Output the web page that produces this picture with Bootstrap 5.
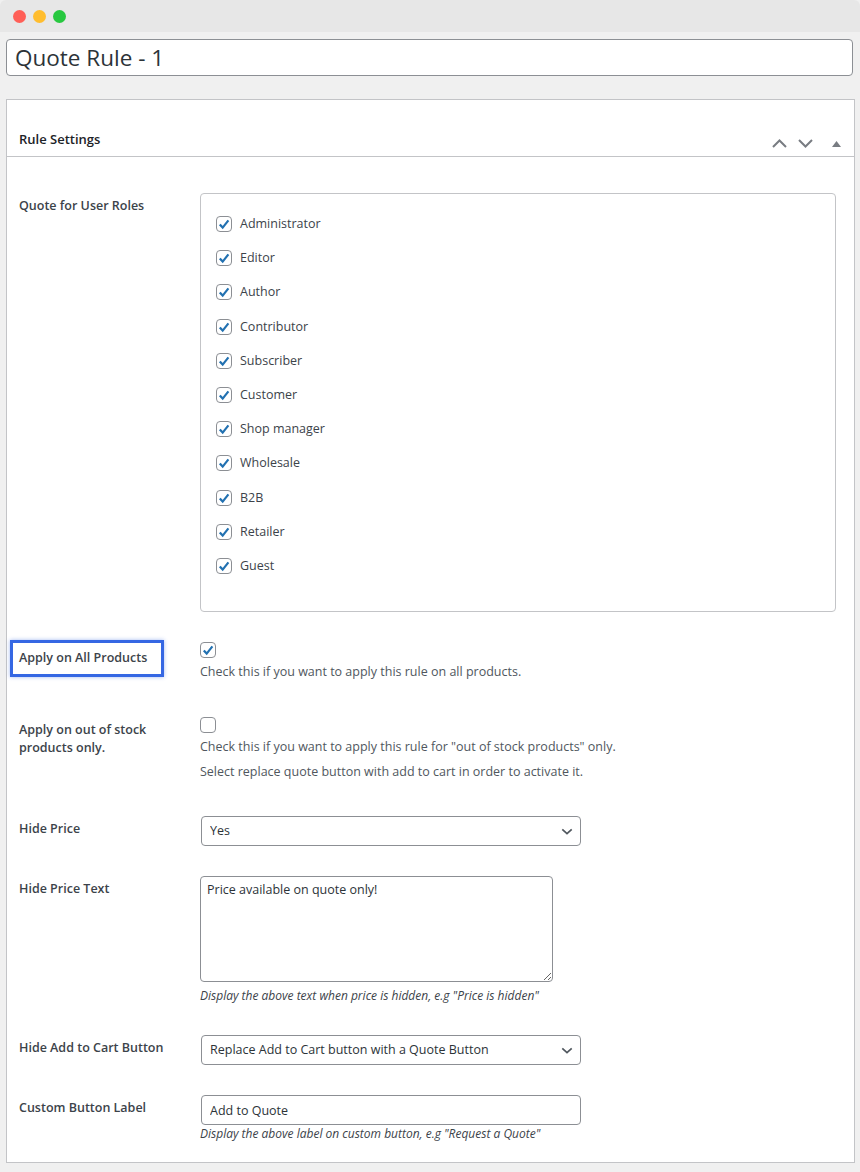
<!DOCTYPE html>
<html lang="en">
<head>
    <meta charset="UTF-8">
    <meta name="viewport" content="width=device-width, initial-scale=1.0">
    <title>Quote Rule - 1</title>
    <link href="https://cdn.jsdelivr.net/npm/bootstrap@5.3.0/dist/css/bootstrap.min.css" rel="stylesheet">
    <style>
        body {
            margin: 0;
            background-color: #f0f0f0;
            font-family: "Open Sans", "Noto Sans", sans-serif;
            font-size: 12.5px;
            line-height: 18px;
            color: #3c434a;
            height: 1172px;
            overflow: hidden;
        }

        /* mac style window bar */
        .win-bar {
            height: 32px;
            background-color: #e7e7e7;
            padding-left: 13px;
            gap: 7px;
            border-top-left-radius: 6px;
            border-top-right-radius: 6px;
        }

        .win-dot {
            width: 13px;
            height: 13px;
            border-radius: 50%;
        }

        .dot-red { background-color: #ff5f57; }
        .dot-yellow { background-color: #ffbd2e; }
        .dot-green { background-color: #28c840; }

        .title-input {
            display: block;
            width: 847px;
            height: 37px;
            margin: 7px 0 23px 6px;
            padding: 0 8px;
            font-size: 22.5px;
            color: #2c3338;
            border: 1px solid #8c8f94;
            border-radius: 4px;
            background: #fff;
        }

        .rule-panel {
            width: 849px;
            height: 1064px;
            margin-left: 6px;
            background: #fff;
            border: 1px solid #c3c4c7;
        }

        .panel-head {
            height: 57px;
            padding: 0 13px 8px 12px;
            border-bottom: 1px solid #c3c4c7;
            font-weight: 600;
            font-size: 13px;
            color: #1d2327;
        }

        .panel-tools { gap: 11px; color: #787c82; }

        .panel-body-wrap { padding: 36px 18px 0 12px; }

        .field-row { display: flex; }

        .field-label {
            width: 181px;
            flex-shrink: 0;
            font-weight: 600;
            color: #3c434a;
        }

        .roles-box {
            width: 637px;
            height: 419px;
            padding: 21px 15px;
            border: 1px solid #c3c4c7;
            border-radius: 4px;
            gap: 16.2px;
        }

        .role-item { gap: 8px; height: 18px; }

        .wp-check {
            appearance: none;
            width: 16px;
            height: 16px;
            margin: 0;
            border: 1px solid #8c8f94;
            border-radius: 4px;
            background: #fff;
            flex-shrink: 0;
            display: block;
        }

        .wp-check:checked {
            background-repeat: no-repeat;
            background-position: center;
            background-size: 14px 14px;
            background-image: url("data:image/svg+xml,%3Csvg xmlns='http://www.w3.org/2000/svg' viewBox='0 0 14 14'%3E%3Cpath d='M2.8 7.4 5.7 10.6 11.4 3.4' fill='none' stroke='%232271b1' stroke-width='2.2'/%3E%3C/svg%3E");
        }

        .highlight-box {
            width: 154px;
            height: 37px;
            margin: -2px 0 0 -9px;
            padding: 6px 0 0 6px;
            border: 3px solid #3567e3;
            box-shadow: 0 0 4px rgba(53, 103, 227, .45);
        }

        .field-text, .help-line { color: #50575e; }
        .help-italic { font-style: italic; color: #3c434a; font-size: 12px; line-height: 18px; }

        .wp-select, .wp-input {
            display: block;
            width: 380px;
            height: 30px;
            margin-left: 1px;
            padding: 0 8px;
            font-size: 12.5px;
            color: #2c3338;
            border: 1px solid #8c8f94;
            border-radius: 4px;
            background-color: #fff;
        }

        .wp-select {
            appearance: none;
            background-image: url("data:image/svg+xml,%3Csvg xmlns='http://www.w3.org/2000/svg' viewBox='0 0 14 8'%3E%3Cpath d='M1.5 1.5 7 6.5 12.5 1.5' fill='none' stroke='%2350575e' stroke-width='2'/%3E%3C/svg%3E");
            background-repeat: no-repeat;
            background-position: right 7px center;
            background-size: 12px 7px;
        }

        .wp-area {
            display: block;
            width: 353px;
            height: 106px;
            padding: 4px 6px;
            font-size: 12.5px;
            line-height: 18px;
            color: #2c3338;
            border: 1px solid #8c8f94;
            border-radius: 4px;
        }
    </style>
</head>
<body>

    <div class="win-bar d-flex align-items-center">
        <span class="win-dot dot-red"></span>
        <span class="win-dot dot-yellow"></span>
        <span class="win-dot dot-green"></span>
    </div>

    <input type="text" class="title-input" value="Quote Rule - 1">

    <div class="rule-panel">
        <div class="panel-head d-flex align-items-end justify-content-between">
            <span>Rule Settings</span>
            <div class="panel-tools d-flex align-items-center">
                <svg width="15" height="9" viewBox="0 0 15 9"><path d="M1 8 7.5 1.5 14 8" fill="none" stroke="#787c82" stroke-width="2"/></svg>
                <svg width="15" height="9" viewBox="0 0 15 9"><path d="M1 1 7.5 7.5 14 1" fill="none" stroke="#787c82" stroke-width="2"/></svg>
                <svg class="ms-2" width="9" height="6" viewBox="0 0 9 6"><path d="M4.5 0 9 6H0z" fill="#787c82"/></svg>
            </div>
        </div>

        <div class="panel-body-wrap">
            <div class="field-row">
                <label class="field-label pt-1">Quote for User Roles</label>
                <div class="roles-box d-flex flex-column">
                    <label class="role-item d-flex align-items-center"><input class="wp-check" type="checkbox" checked>Administrator</label>
                    <label class="role-item d-flex align-items-center"><input class="wp-check" type="checkbox" checked>Editor</label>
                    <label class="role-item d-flex align-items-center"><input class="wp-check" type="checkbox" checked>Author</label>
                    <label class="role-item d-flex align-items-center"><input class="wp-check" type="checkbox" checked>Contributor</label>
                    <label class="role-item d-flex align-items-center"><input class="wp-check" type="checkbox" checked>Subscriber</label>
                    <label class="role-item d-flex align-items-center"><input class="wp-check" type="checkbox" checked>Customer</label>
                    <label class="role-item d-flex align-items-center"><input class="wp-check" type="checkbox" checked>Shop manager</label>
                    <label class="role-item d-flex align-items-center"><input class="wp-check" type="checkbox" checked>Wholesale</label>
                    <label class="role-item d-flex align-items-center"><input class="wp-check" type="checkbox" checked>B2B</label>
                    <label class="role-item d-flex align-items-center"><input class="wp-check" type="checkbox" checked>Retailer</label>
                    <label class="role-item d-flex align-items-center"><input class="wp-check" type="checkbox" checked>Guest</label>
                </div>
            </div>

            <div class="field-row" style="margin-top: 30px">
                <div class="field-label"><div class="highlight-box">Apply on All Products</div></div>
                <div>
                    <input class="wp-check" type="checkbox" checked>
                    <div class="field-text" style="margin-top: 5px">Check this if you want to apply this rule on all products.</div>
                </div>
            </div>

            <div class="field-row" style="margin-top: 36px">
                <label class="field-label" style="padding-top: 4px; width: 181px">Apply on out of stock<br>products only.</label>
                <div>
                    <input class="wp-check" type="checkbox">
                    <div class="field-text" style="margin-top: 5px">Check this if you want to apply this rule for "out of stock products" only.</div>
                    <div class="help-line" style="margin-top: 7px">Select replace quote button with add to cart in order to activate it.</div>
                </div>
            </div>

            <div class="field-row" style="margin-top: 35px">
                <label class="field-label pt-1">Hide Price</label>
                <select class="wp-select"><option>Yes</option></select>
            </div>

            <div class="field-row" style="margin-top: 30px">
                <label class="field-label pt-1">Hide Price Text</label>
                <div>
                    <textarea class="wp-area">Price available on quote only!</textarea>
                    <div class="help-italic" style="margin-top: 5px">Display the above text when price is hidden, e.g "Price is hidden"</div>
                </div>
            </div>

            <div class="field-row" style="margin-top: 30px">
                <label class="field-label pt-1">Hide Add to Cart Button</label>
                <select class="wp-select"><option>Replace Add to Cart button with a Quote Button</option></select>
            </div>

            <div class="field-row" style="margin-top: 30px">
                <label class="field-label pt-1">Custom Button Label</label>
                <div>
                    <input type="text" class="wp-input" value="Add to Quote">
                    <div class="help-italic">Display the above label on custom button, e.g "Request a Quote"</div>
                </div>
            </div>
        </div>
    </div>

    <script src="https://cdn.jsdelivr.net/npm/bootstrap@5.3.0/dist/js/bootstrap.bundle.min.js"></script>
</body>
</html>
